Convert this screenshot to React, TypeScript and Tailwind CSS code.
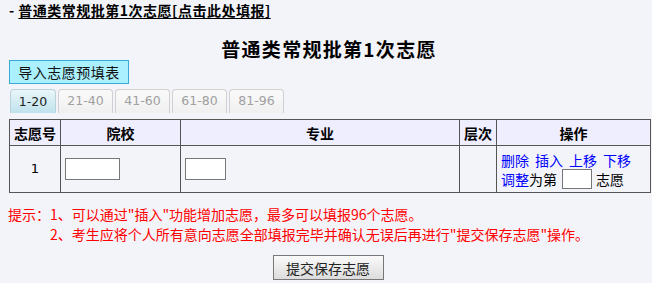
import React from "react";

const cjk = "font-['Noto_Sans_CJK_SC','Noto_Sans',sans-serif]";

export default function App() {
  const tabs = ["1-20", "21-40", "41-60", "61-80", "81-96"];
  return (
    <div className={`w-[652px] h-[283px] bg-[#f3f4f9] text-[14px] text-black overflow-hidden ${cjk}`}>
      {/* top link */}
      <div className="h-[20px] pl-[9px] pt-[1px] leading-[18px] font-bold text-[14px] tracking-[0.5px]">
        <span>- </span>
        <a className="underline underline-offset-2 text-black" href="#">
          普通类常规批第1次志愿[点击此处填报]
        </a>
      </div>
      {/* title */}
      <div className="h-[40px] flex items-end justify-center">
        <div className="font-bold text-[19px] leading-[22px] tracking-[1.3px] pl-[6px]">普通类常规批第1次志愿</div>
      </div>
      {/* import button */}
      <div className="pl-[9px]">
        <button className="w-[120px] h-[24px] bg-[#aaf0ff] border border-[#39a9d9] text-[14px] leading-[20px] text-[#111] tracking-[0.5px]">
          导入志愿预填表
        </button>
      </div>
      {/* tabs */}
      <div className="flex gap-[2px] pl-[10px] mt-[5px] h-[24px] font-['DejaVu_Sans','Verdana',sans-serif] text-[12.5px]">
        {tabs.map((t, i) => (
          <div
            key={t}
            className={
              i === 0
                ? "w-[46px] h-[24px] rounded-t-[4px] border border-b-0 border-[#b9d3dc] bg-gradient-to-b from-[#eaf6fa] to-[#bfe2ec] text-[#222] flex items-center justify-center pt-[2px]"
                : "w-[55px] h-[24px] rounded-t-[4px] border border-b-0 border-[#d0d0d0] bg-gradient-to-b from-[#fafafa] to-[#f0f0f0] text-[#a0a0a0] flex items-center justify-center"
            }
          >
            {t}
          </div>
        ))}
      </div>
      {/* table */}
      <div className="pl-[9px] mt-[6px]">
        <table className="border-collapse w-[641px] table-fixed">
          <colgroup>
            <col className="w-[51px]" />
            <col className="w-[120px]" />
            <col className="w-[279px]" />
            <col className="w-[37px]" />
            <col className="w-[154px]" />
          </colgroup>
          <thead>
            <tr className="h-[26px] bg-[#eeeeff]">
              {["志愿号", "院校", "专业", "层次", "操作"].map((h) => (
                <th key={h} className="border border-[#555] font-bold text-[14px] leading-[18px] p-0 text-center">
                  {h}
                </th>
              ))}
            </tr>
          </thead>
          <tbody>
            <tr className="h-[47px]">
              <td className="border border-[#555] text-center p-0 font-['DejaVu_Sans',sans-serif] text-[13px]">1</td>
              <td className="border border-[#555] px-[4px] py-0">
                <input className="block w-[55px] h-[22px] bg-white border border-[#777] outline-none" />
              </td>
              <td className="border border-[#555] px-[4px] py-0">
                <input className="block w-[41px] h-[22px] bg-white border border-[#777] outline-none" />
              </td>
              <td className="border border-[#555] p-0"></td>
              <td className="border border-[#555] pl-[4px] py-0 align-middle">
                <div className="flex gap-[6px] leading-[18px] text-[#0000ff] pt-[2px]">
                  <a href="#">删除</a>
                  <a href="#">插入</a>
                  <a href="#">上移</a>
                  <a href="#">下移</a>
                </div>
                <div className="flex items-center leading-[18px]">
                  <a href="#" className="text-[#0000ff]">调整</a>
                  <span>为第</span>
                  <input className="ml-[5px] mr-[4px] w-[30px] h-[20px] bg-white border border-[#777] outline-none" />
                  <span>志愿</span>
                </div>
              </td>
            </tr>
          </tbody>
        </table>
      </div>
      {/* hints */}
      <div className="mt-[11px] pl-[8px] text-[#ff0000] text-[14px] leading-[20px]">
        <div>提示：1、可以通过"插入"功能增加志愿，最多可以填报96个志愿。</div>
        <div className="pl-[42px]">2、考生应将个人所有意向志愿全部填报完毕并确认无误后再进行"提交保存志愿"操作。</div>
      </div>
      {/* submit */}
      <div className="flex justify-center mt-[11px] pl-[4px]">
        <button className="w-[111px] h-[25px] border border-[#777] bg-gradient-to-b from-[#fafafa] to-[#dcdcdc] text-[14px] leading-[20px] text-[#222]">
          提交保存志愿
        </button>
      </div>
    </div>
  );
}
